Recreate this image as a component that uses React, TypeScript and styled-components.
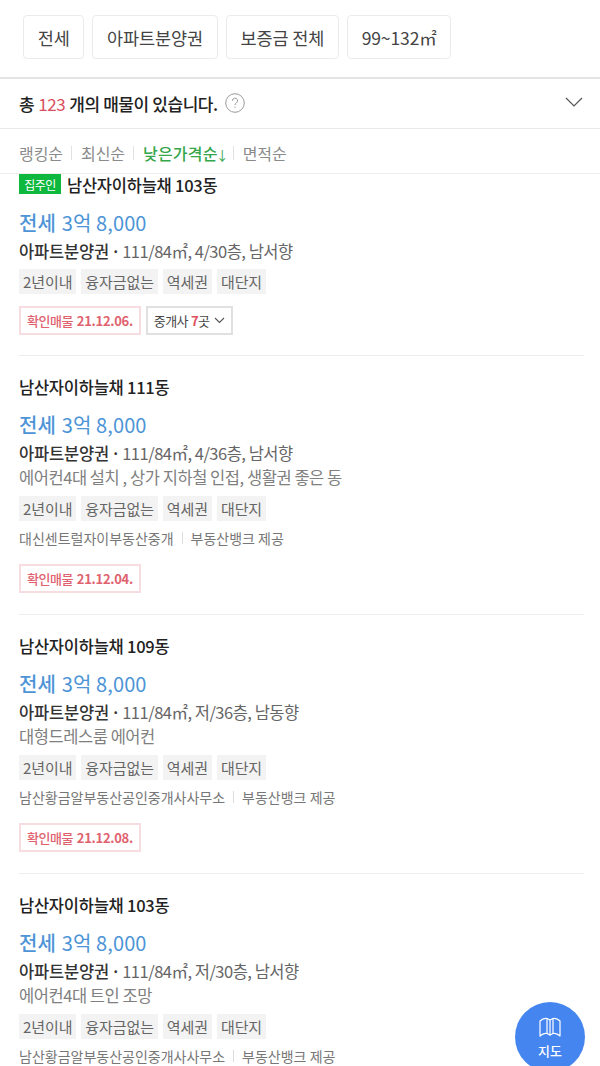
import React from 'react';
import styled, { createGlobalStyle } from 'styled-components';

const GlobalStyle = createGlobalStyle`
  html, body {
    margin: 0;
    padding: 0;
    background: #fff;
  }
  body {
    font-family: "Noto Sans CJK KR", "Noto Sans", sans-serif;
    color: #222;
  }
`;

const Root = styled.section`
  position: relative;
  width: 600px;
  height: 1066px;
  overflow: hidden;
  display: flex;
  flex-direction: column;
`;

const FilterBar = styled.div`
  height: 77px;
  box-sizing: border-box;
  padding: 15px 0 0 23px;
  display: flex;
  gap: 8px;
  align-items: flex-start;
`;

const Chip = styled.div`
  height: 44px;
  box-sizing: border-box;
  padding: 0 13.7px;
  display: flex;
  align-items: center;
  border: 1px solid #ebebeb;
  border-radius: 4px;
  font-size: 17.5px;
  letter-spacing: -0.1px;
  color: #444;
`;

const Summary = styled.div`
  height: 52px;
  box-sizing: border-box;
  border-top: 2px solid #e4e4e4;
  border-bottom: 1px solid #e8e8e8;
  padding: 0 17px 0 19px;
  display: flex;
  align-items: center;
  justify-content: space-between;
  > svg {
    margin-top: -4px;
  }
`;

const SummaryText = styled.div`
  display: flex;
  align-items: center;
  font-size: 17px;
  font-weight: 500;
  letter-spacing: -0.42px;
  color: #222;
  span {
    color: #d9505e;
    font-weight: 400;
    margin: 0 4px;
  }
  svg {
    margin: -2px 0 0 7px;
  }
`;

const SortBar = styled.div`
  height: 45px;
  box-sizing: border-box;
  border-bottom: 1px solid #ededed;
  padding: 3px 19px 0;
  display: flex;
  align-items: center;
  font-size: 16px;
`;

const SortItem = styled.div<{ $active?: boolean }>`
  color: ${(p) => (p.$active ? '#35a64a' : '#8a8a8a')};
  font-weight: ${(p) => (p.$active ? 500 : 400)};
  letter-spacing: ${(p) => (p.$active ? '0.2px' : '-0.05px')};
  white-space: nowrap;
  & + & {
    margin-left: 8px;
    padding-left: 10px;
    background: linear-gradient(#e2e2e2, #e2e2e2) left 50% / 1px 14px no-repeat;
  }
  span {
    display: inline-block;
    width: 9px;
    margin-left: -2px;
    font-weight: 400;
    font-size: 13px;
  }
`;

const List = styled.div`
  flex: 1;
  overflow: hidden;
  padding: 0 16px 0 19px;
`;

const Card = styled.article<{ $first?: boolean }>`
  height: ${(p) => (p.$first ? '182px' : '259px')};
  box-sizing: border-box;
  padding-top: ${(p) => (p.$first ? '0' : '20px')};
  border-bottom: 1px solid #eee;
`;

const TitleRow = styled.div`
  height: 22px;
  display: flex;
  align-items: center;
  font-size: 16.5px;
  font-weight: 500;
  letter-spacing: -0.25px;
  color: #222;
`;

const OwnerBadge = styled.span`
  width: 42px;
  height: 20px;
  margin: -2px 6px 0 0;
  background: #0eb83e;
  color: #fff;
  font-size: 12px;
  font-weight: 400;
  display: flex;
  align-items: center;
  justify-content: center;
  letter-spacing: -0.5px;
`;

const Price = styled.div`
  margin-top: 12px;
  height: 30px;
  line-height: 30px;
  font-size: 20px;
  color: #4d94d6;
  letter-spacing: 0.1px;
  b {
    font-weight: 500;
    letter-spacing: 0;
    margin-right: 6px;
  }
`;

const Spec = styled.div`
  height: 24px;
  line-height: 24px;
  margin-top: 1px;
  font-size: 16.5px;
  color: #666;
  letter-spacing: -0.5px;
  b {
    font-weight: 500;
    color: #333;
    letter-spacing: -0.2px;
    word-spacing: -1.5px;
  }
`;

const Desc = styled.div`
  height: 25px;
  line-height: 24px;
  font-size: 16.5px;
  color: #808080;
  letter-spacing: -0.45px;
`;

const Tags = styled.div`
  margin-top: 6px;
  display: flex;
  gap: 5px;
`;

const Tag = styled.span`
  height: 25px;
  padding: 0 4px;
  background: #f3f3f3;
  color: #666;
  font-size: 15px;
  line-height: 25px;
  letter-spacing: -0.1px;
`;

const Broker = styled.div`
  margin: 8px 0 17px;
  height: 18px;
  line-height: 18px;
  font-size: 14px;
  color: #777;
  display: flex;
  align-items: center;
  i {
    width: 1px;
    height: 12px;
    background: #ddd;
    margin: 0 8px;
  }
`;

const Actions = styled.div`
  margin-top: 12px;
  display: flex;
  gap: 5px;
`;

const Confirm = styled.div`
  height: 29px;
  box-sizing: border-box;
  border: 2px solid #f7dde0;
  padding: 0 6px;
  display: flex;
  align-items: center;
  font-size: 13px;
  font-weight: 500;
  letter-spacing: -0.5px;
  color: #e0626f;
  b {
    font-weight: 700;
    margin-left: 4px;
    letter-spacing: -0.3px;
  }
`;

const Agents = styled.div`
  height: 29px;
  box-sizing: border-box;
  border: 2px solid #e0e0e0;
  padding: 0 6px;
  display: flex;
  align-items: center;
  font-size: 13px;
  letter-spacing: -0.6px;
  color: #444;
  b {
    color: #e0505e;
    font-weight: 700;
    margin-left: 3px;
  }
  svg {
    margin-left: 5px;
  }
`;

const MapButton = styled.div`
  position: absolute;
  left: 515px;
  top: 1002px;
  width: 70px;
  height: 70px;
  border-radius: 50%;
  background: #4585f0;
  color: #fff;
  display: flex;
  flex-direction: column;
  align-items: center;
  padding-top: 14px;
  box-sizing: border-box;
  font-size: 13px;
  font-weight: 500;
  svg {
    margin-bottom: 3px;
  }
`;

interface Listing {
  title: string;
  spec: string;
  desc?: string;
  broker?: string;
  date?: string;
  first?: boolean;
}

const listings: Listing[] = [
  { title: '남산자이하늘채 103동', spec: '111/84㎡, 4/30층, 남서향', date: '21.12.06.', first: true },
  {
    title: '남산자이하늘채 111동',
    spec: '111/84㎡, 4/36층, 남서향',
    desc: '에어컨4대 설치 , 상가 지하철 인접, 생활권 좋은 동',
    broker: '대신센트럴자이부동산중개',
    date: '21.12.04.',
  },
  {
    title: '남산자이하늘채 109동',
    spec: '111/84㎡, 저/36층, 남동향',
    desc: '대형드레스룸 에어컨',
    broker: '남산황금알부동산공인중개사사무소',
    date: '21.12.08.',
  },
  {
    title: '남산자이하늘채 103동',
    spec: '111/84㎡, 저/30층, 남서향',
    desc: '에어컨4대 트인 조망',
    broker: '남산황금알부동산공인중개사사무소',
  },
];

const tags = ['2년이내', '융자금없는', '역세권', '대단지'];

export default function App() {
  return (
    <Root>
      <GlobalStyle />
      <FilterBar>
        <Chip>전세</Chip>
        <Chip>아파트분양권</Chip>
        <Chip>보증금 전체</Chip>
        <Chip>99~132㎡</Chip>
      </FilterBar>
      <Summary>
        <SummaryText>
          총<span>123</span>개의 매물이 있습니다.
          <svg width="20" height="20" viewBox="0 0 20 20" fill="none" stroke="#999" strokeWidth="1">
            <circle cx="10" cy="10" r="9.3" />
            <path d="M7.4 7.8a2.6 2.6 0 1 1 3.9 2.2c-.9.5-1.3 1-1.3 2" />
            <path d="M10 13.6v1.2" />
          </svg>
        </SummaryText>
        <svg width="18" height="10" viewBox="0 0 18 10" fill="none" stroke="#555" strokeWidth="1.2">
          <path d="M1 1l8 8 8-8" />
        </svg>
      </Summary>
      <SortBar>
        <SortItem>랭킹순</SortItem>
        <SortItem>최신순</SortItem>
        <SortItem $active>
          낮은가격순<span>↓</span>
        </SortItem>
        <SortItem>면적순</SortItem>
      </SortBar>
      <List>
        {listings.map((item) => (
          <Card key={item.title + item.spec} $first={item.first}>
            <TitleRow>
              {item.first && <OwnerBadge>집주인</OwnerBadge>}
              {item.title}
            </TitleRow>
            <Price>
              <b>전세</b>3억 8,000
            </Price>
            <Spec>
              <b>아파트분양권 · </b>
              {item.spec}
            </Spec>
            {item.desc && <Desc>{item.desc}</Desc>}
            <Tags>
              {tags.map((t) => (
                <Tag key={t}>{t}</Tag>
              ))}
            </Tags>
            {item.broker && (
              <Broker>
                {item.broker}
                <i />
                부동산뱅크 제공
              </Broker>
            )}
            {item.date && (
              <Actions>
                <Confirm>
                  확인매물<b>{item.date}</b>
                </Confirm>
                {item.first && (
                  <Agents>
                    중개사<b>7</b>곳
                    <svg width="11" height="7" viewBox="0 0 11 7" fill="none" stroke="#555" strokeWidth="1.1">
                      <path d="M1 1l4.5 4.5L10 1" />
                    </svg>
                  </Agents>
                )}
              </Actions>
            )}
          </Card>
        ))}
      </List>
      <MapButton>
        <svg width="24" height="22" viewBox="0 0 24 22" fill="none" stroke="#fff" strokeWidth="1.2" strokeLinejoin="round">
          <path d="M2 5c2-2 5-3 7-2.500l3 1.500 3-1.500c2-.5 5 .5 7 2.500v15c-2-2-5-3-7-2.500l-3 1.500-3-1.500c-2-.5-5 .5-7 2.500z" />
          <path d="M9 2.500v15M12 4v15.500M15 2.500v15" />
        </svg>
        지도
      </MapButton>
    </Root>
  );
}
